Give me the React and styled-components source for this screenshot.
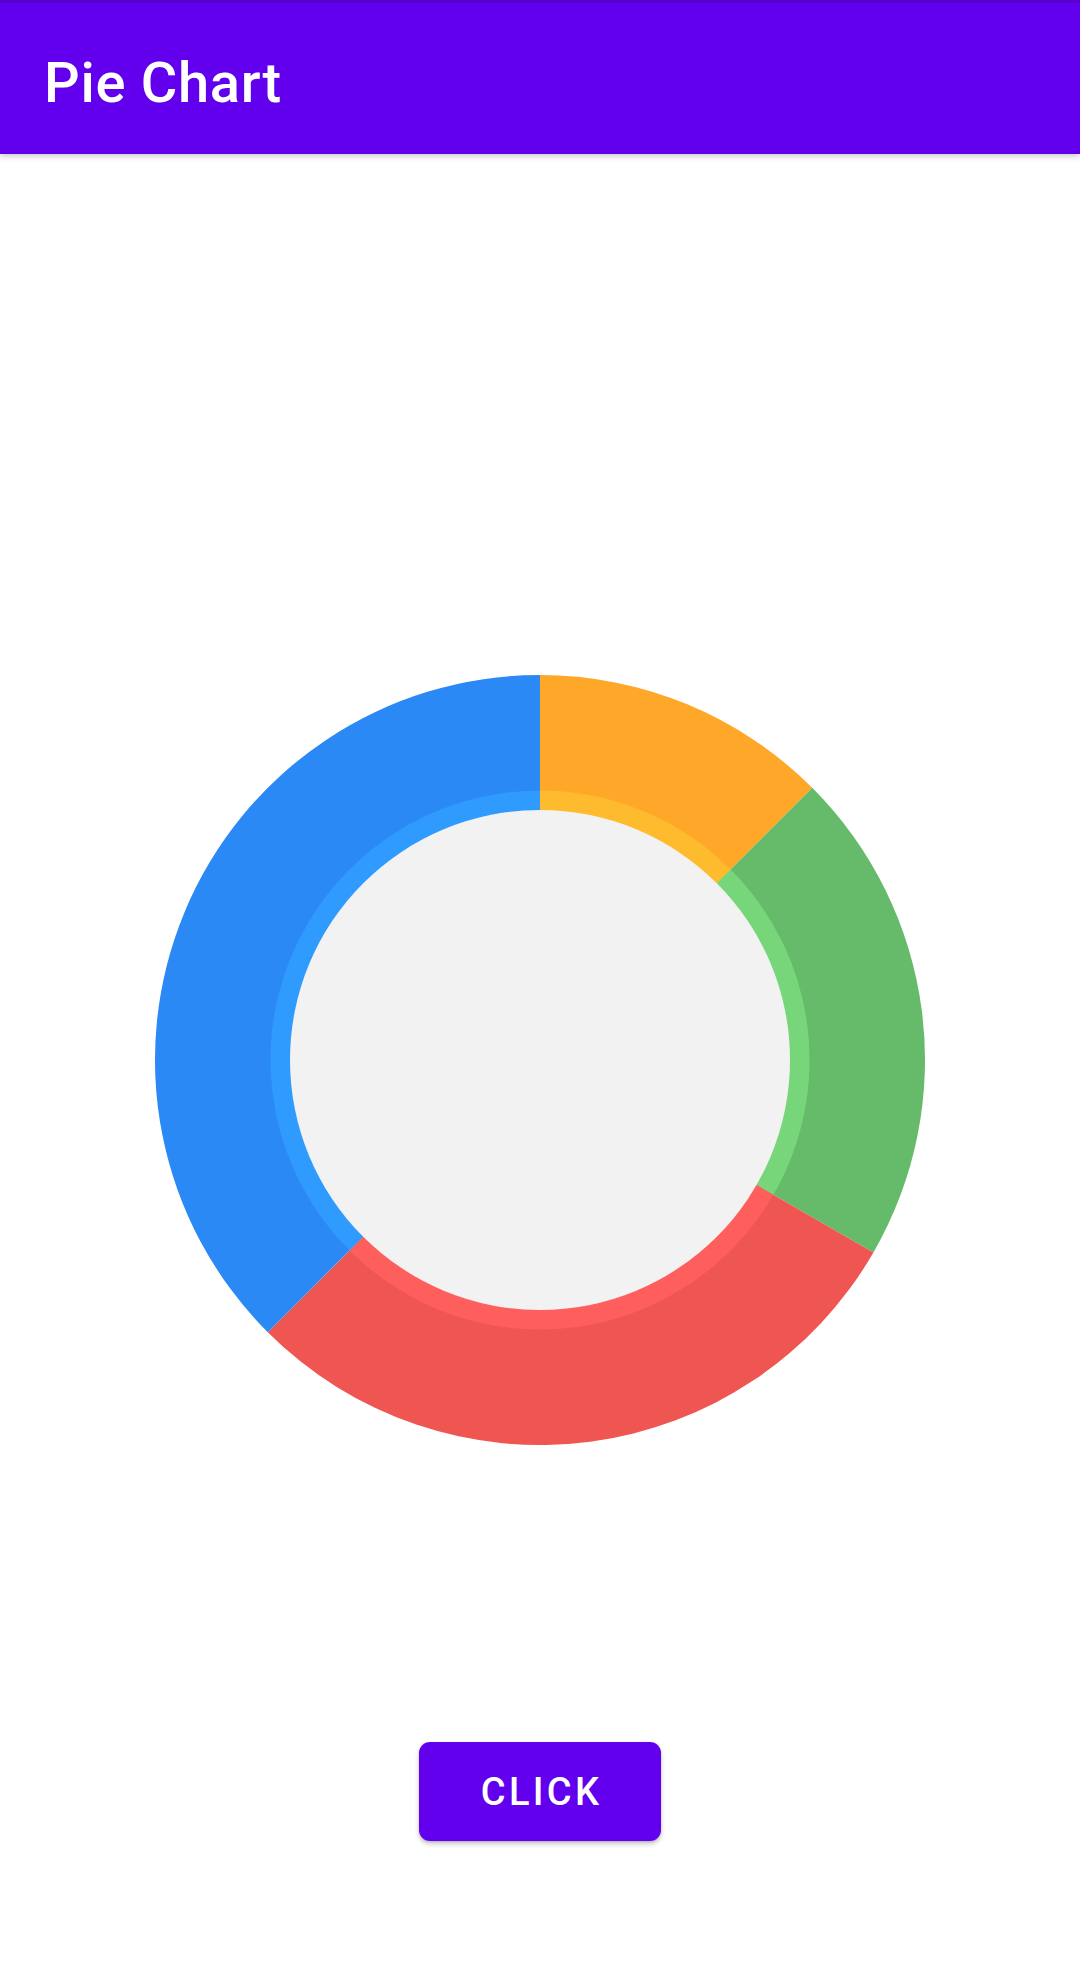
import React from "react";
import styled, { createGlobalStyle } from "styled-components";

const GlobalStyle = createGlobalStyle`
  html, body {
    margin: 0;
    padding: 0;
    background: #ffffff;
    font-family: Roboto, "Noto Sans", "Liberation Sans", sans-serif;
  }
  * { box-sizing: border-box; }
`;

const Page = styled.div`
  width: 1080px;
  min-height: 1978px;
  background: #ffffff;
  display: flex;
  flex-direction: column;
`;

const Toolbar = styled.header`
  height: 154px;
  background: #6200ee;
  border-top: 3px solid #5500cf;
  display: flex;
  align-items: center;
  padding: 8px 44px 0;
  box-shadow: 0 2px 6px rgba(0, 0, 0, 0.22);
  position: relative;
  z-index: 1;
`;

const Title = styled.h1`
  margin: 0;
  color: #ffffff;
  font-family: Roboto, "Noto Sans", sans-serif;
  font-weight: 500;
  font-size: 56px;
  line-height: 1;
  letter-spacing: 0.7px;
`;

const Content = styled.main`
  display: flex;
  flex-direction: column;
  align-items: center;
`;

const ChartArea = styled.div`
  padding-top: 521px;
  display: flex;
  justify-content: center;
`;

const ChartSvg = styled.svg`
  display: block;
  width: 770px;
  height: 770px;
`;

const Button = styled.button`
  margin-top: 297px;
  width: 242px;
  height: 99px;
  border: none;
  border-radius: 11px;
  background: #6200ee;
  color: #ffffff;
  font-family: Roboto, "Noto Sans", sans-serif;
  font-weight: 500;
  font-size: 38px;
  letter-spacing: 3.3px;
  text-transform: uppercase;
  box-shadow: 0 3px 5px rgba(0, 0, 0, 0.22), 0 1px 2px rgba(0, 0, 0, 0.12);
  cursor: pointer;
  padding: 0 0 0 3px;
`;

const slices = [
  { value: 3, main: "#fea729", ring: "#ffbb2e" },
  { value: 5, main: "#66bb6a", ring: "#78d67a" },
  { value: 7, main: "#ef5551", ring: "#ff5f5c" },
  { value: 9, main: "#2a89f5", ring: "#2f9bff" },
];

const C = 385;

function pt(r, deg) {
  const a = ((deg - 90) * Math.PI) / 180;
  return [C + r * Math.cos(a), C + r * Math.sin(a)];
}

function wedge(r, a0, a1) {
  const [x0, y0] = pt(r, a0);
  const [x1, y1] = pt(r, a1);
  const large = a1 - a0 > 180 ? 1 : 0;
  return `M ${C} ${C} L ${x0} ${y0} A ${r} ${r} 0 ${large} 1 ${x1} ${y1} Z`;
}

function PieChart() {
  const total = slices.reduce((s, d) => s + d.value, 0);
  let acc = 0;
  const arcs = slices.map((d) => {
    const a0 = (acc / total) * 360;
    acc += d.value;
    const a1 = (acc / total) * 360;
    return { ...d, a0, a1 };
  });
  return (
    <ChartSvg viewBox="0 0 770 770">
      {arcs.map((s, i) => (
        <path key={"m" + i} d={wedge(385, s.a0, s.a1)} fill={s.main} />
      ))}
      {arcs.map((s, i) => (
        <path key={"r" + i} d={wedge(269.5, s.a0, s.a1)} fill={s.ring} />
      ))}
      <circle cx={C} cy={C} r={250} fill="#f2f2f2" />
    </ChartSvg>
  );
}

export default function App() {
  return (
    <>
      <GlobalStyle />
      <Page>
        <Toolbar>
          <Title>Pie Chart</Title>
        </Toolbar>
        <Content>
          <ChartArea>
            <PieChart />
          </ChartArea>
          <Button>Click</Button>
        </Content>
      </Page>
    </>
  );
}
